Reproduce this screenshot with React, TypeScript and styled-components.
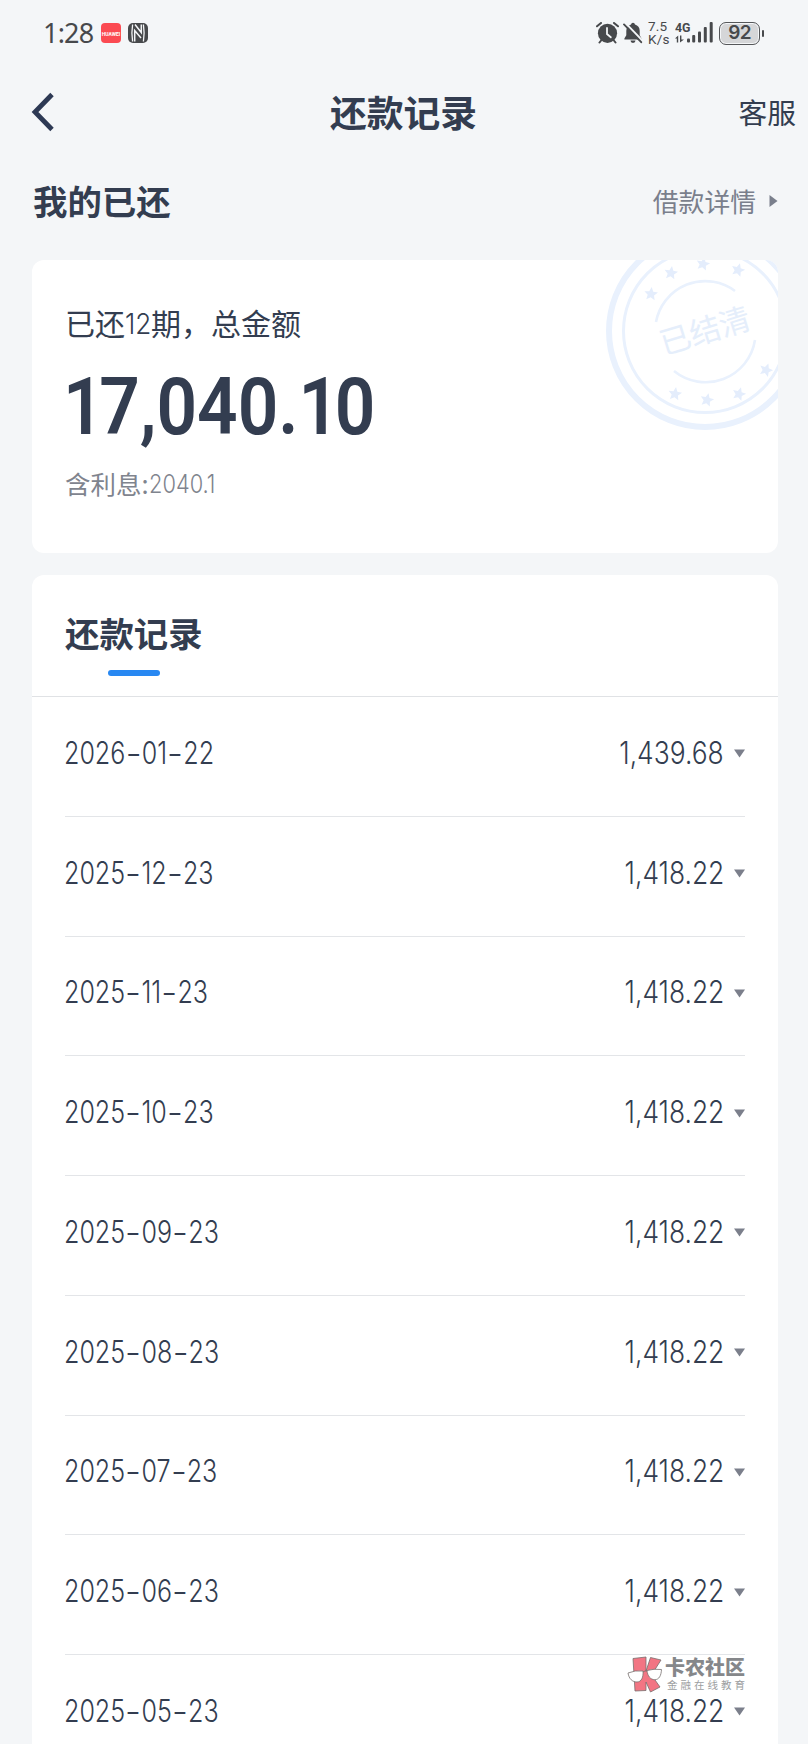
import React from 'react';
import styled, { createGlobalStyle } from 'styled-components';

const GlobalStyle = createGlobalStyle`
  * { box-sizing: border-box; }
  body {
    margin: 0;
    background: #f4f6f8;
    color: #333d50;
    font-family: 'Noto Sans CJK SC', sans-serif;
  }
`;

const Screen = styled.div`
  position: relative;
  width: 808px;
  height: 1744px;
  overflow: hidden;
  display: flex;
  flex-direction: column;
`;

const StatusBar = styled.header`
  flex: none;
  height: 66px;
  padding: 0 44px 0 43px;
  display: flex;
  align-items: center;
  justify-content: space-between;
  color: #47494c;
  font-family: Roboto, sans-serif;
`;

const StatusGroup = styled.div`
  display: flex;
  align-items: center;
`;

const Clock = styled.span`
  width: 58px;
  font: 400 27px/30px 'Noto Sans', sans-serif;
  letter-spacing: -0.8px;
`;

const AppBadge = styled.span`
  width: 20px;
  height: 20px;
  margin-right: 7px;
  border-radius: 4px;
  background: #fb4a52;
  color: #fff;
  font: 700 5px/22px Roboto, sans-serif;
  text-align: center;
`;

const NetSpeed = styled.div`
  width: 23px;
  margin: 0 4px 0 5px;
  font-size: 13.5px;
  line-height: 13px;
  letter-spacing: 0.2px;
  white-space: nowrap;
`;

const Signal = styled.svg`
  margin-right: 5px;
`;

const Battery = styled.div`
  width: 41px;
  height: 23px;
  border: 1.5px solid #55575a;
  border-radius: 7px;
  background: #d5d6d8;
  box-shadow: inset 0 0 0 1px #f4f6f8;
  font: 600 19px/20px Inter, sans-serif;
  letter-spacing: -0.8px;
  text-align: center;
`;

const BatteryTip = styled.span`
  width: 2px;
  height: 7px;
  margin-left: 2px;
  border-radius: 1px;
  background: #47494c;
`;

const NavBar = styled.nav`
  flex: none;
  height: 92px;
  padding: 0 12px;
  display: grid;
  grid-template-columns: 1fr auto 1fr;
  align-items: center;
`;

const BackIcon = styled.svg`
  margin-left: 19px;
`;

const PageTitle = styled.h1`
  margin: -3px 1px 0 0;
  font-size: 36.8px;
  line-height: 44px;
  font-weight: 700;
`;

const NavLink = styled.span`
  margin-top: -1px;
  justify-self: end;
  font-size: 28.8px;
  line-height: 40px;
`;

const SectionHead = styled.div`
  flex: none;
  height: 102px;
  padding: 20px 30px 0 33px;
  display: flex;
  align-items: flex-start;
  justify-content: space-between;
`;

const Heading = styled.h2`
  margin: 0;
  font-size: 34.4px;
  line-height: 44px;
  font-weight: 700;
`;

const DetailLink = styled.span`
  margin-top: 2px;
  display: flex;
  align-items: center;
  gap: 13px;
  font-size: 25.8px;
  line-height: 42px;
  color: #7a7f8c;
`;

const Card = styled.section<{ $height: number }>`
  position: relative;
  height: ${(p) => p.$height}px;
  margin: 0 30px 22px 32px;
  flex: none;
  border-radius: 12px;
  background: #fff;
  overflow: hidden;
`;

const Summary = styled.div`
  padding: 42px 33px 0;
  display: flex;
  flex-direction: column;
  align-items: flex-start;
`;

const SummaryLabel = styled.div`
  display: flex;
  font-size: 30px;
  line-height: 40px;
`;

const LabelCount = styled.span`
  width: 26px;
  font: 350 29px/43px Inter, sans-serif;
  transform: scaleX(0.9);
  transform-origin: left;
`;

const Total = styled.div`
  margin: 20px 0 0 -2px;
  font: 600 79px/84px Roboto, sans-serif;
  white-space: nowrap;
  transform: scaleX(0.9);
  transform-origin: left;
`;

const NarrowDigit = styled.span`
  letter-spacing: -5px;
`;

const Interest = styled.div`
  margin-top: 15px;
  display: flex;
  font-size: 25.5px;
  line-height: 38px;
  color: #7f848e;
`;

const InterestValue = styled.span`
  font: 350 26px/40px Inter, sans-serif;
  transform: scaleX(0.84);
  transform-origin: left;
`;

const Seal = styled.svg`
  position: absolute;
  top: -29.5px;
  right: -28px;
`;

const TabHead = styled.div`
  height: 122px;
  padding: 35px 33px 0;
  border-bottom: 1px solid #e0e2e5;
`;

const TabLine = styled.div`
  width: 52px;
  height: 6px;
  margin: 16px 0 0 43px;
  border-radius: 3px;
  background: #2888f2;
`;

const Records = styled.ul`
  margin: 0;
  padding: 0 33px;
  list-style: none;
`;

const Row = styled.li`
  height: 119.75px;
  padding-bottom: 7px;
  display: flex;
  align-items: center;
  justify-content: space-between;
  border-bottom: 1px solid #e3e5e8;
`;

const DateText = styled.span`
  margin-left: -1px;
  font: 350 30.5px/40px Inter, sans-serif;
  transform: scaleX(0.822);
  transform-origin: left;
`;

const Dash = styled.span`
  display: inline-block;
  margin: 0 3px;
  transform: scaleX(1.4);
`;

const Amount = styled.span`
  display: flex;
  align-items: center;
  gap: 10px;
`;

const AmountText = styled.span`
  font: 350 30.5px/40px Inter, sans-serif;
  transform: scaleX(0.865);
  transform-origin: right;
`;

const Caret = styled.svg`
  margin-top: 2px;
`;

const Watermark = styled.div`
  position: absolute;
  left: 627px;
  top: 1656px;
  display: flex;
  gap: 2px;
  color: #85878a;
`;

const BrandName = styled.div`
  font-size: 20px;
  line-height: 21px;
  font-weight: 900;
`;

const BrandTag = styled.div`
  margin: 2px 0 0 2px;
  font-size: 10.5px;
  line-height: 12px;
  letter-spacing: 3px;
  white-space: nowrap;
  color: #9c9ea1;
`;

const records = [
  ['2026-01-22', '1,439.68'],
  ['2025-12-23', '1,418.22'],
  ['2025-11-23', '1,418.22'],
  ['2025-10-23', '1,418.22'],
  ['2025-09-23', '1,418.22'],
  ['2025-08-23', '1,418.22'],
  ['2025-07-23', '1,418.22'],
  ['2025-06-23', '1,418.22'],
  ['2025-05-23', '1,418.22'],
];

const stars = [
  [46, 63], [66, 42], [98, 33], [133, 39], [70, 163], [102, 169], [134, 163], [161, 139],
];

const NfcIcon = () => (
  <svg width="20" height="20" viewBox="0 0 20 20">
    <rect width="20" height="20" rx="5" fill="#47494c" />
    <path d="M4.6 1.5Q3.2 10 4.6 18.5M15.4 1.5Q16.8 10 15.4 18.5" fill="none" stroke="#f4f6f8" strokeWidth="1.3" />
    <path d="M6.7 18.5V7.5L13 15M7 1.5l6.3 8V1.5" fill="none" stroke="#f4f6f8" strokeWidth="1.5" />
  </svg>
);

const AlarmIcon = () => (
  <svg width="23" height="22" viewBox="0 0 23 22">
    <path d="M1 4.3L5 1M22 4.3L18 1M5.5 18L3.5 20.5M17.5 18l2 2.5" stroke="#47494c" strokeWidth="2" strokeLinecap="round" />
    <circle cx="11.5" cy="11.3" r="9.6" fill="#47494c" />
    <path d="M11 6v6l3.8 3.3" fill="none" stroke="#f4f6f8" strokeWidth="1.8" strokeLinecap="round" />
  </svg>
);

const BellSvg = styled.svg`
  margin-left: 4px;
`;

const BellOffIcon = () => (
  <BellSvg width="20" height="22" viewBox="0 0 20 22">
    <path d="M10 .8a2 2 0 012 1.6c3 .8 4.7 3.2 4.7 6.3v4.5l1.9 3.3v1H1.4v-1l1.9-3.3V8.7c0-3 1.8-5.5 4.7-6.3A2 2 0 0110 .8zM7.5 18.6h5a2.5 2.4 0 01-5 0z" fill="#47494c" />
    <path d="M2.8 1.4L20 19.2" stroke="#f4f6f8" strokeWidth="2" />
    <path d="M1 2.4L18.2 20.2" stroke="#47494c" strokeWidth="1.9" strokeLinecap="round" />
  </BellSvg>
);

const SignalIcon = () => (
  <Signal width="39" height="24" viewBox="0 0 39 24" fill="#47494c">
    <text x="0" y="10.5" fontFamily="Roboto, sans-serif" fontSize="13" fontWeight="700" textLength="15.5" lengthAdjust="spacingAndGlyphs">4G</text>
    <path d="M0 17.5L3.2 14.5v7H1.8v-4zM5 14.5h1.4v4H9L5 21.5z" />
    <rect x="12" y="17.5" width="3" height="4" rx="1" />
    <rect x="17.2" y="14" width="3" height="7.5" rx="1" />
    <rect x="23" y="10.5" width="3" height="11" rx="1" />
    <rect x="28.8" y="6" width="3" height="15.5" rx="1" />
    <rect x="34.7" y="1" width="3" height="20.5" rx="1" />
  </Signal>
);

const SealMark = () => (
  <Seal width="200" height="200" viewBox="0 0 200 200" fill="none" stroke="#e9f1fd">
    <circle cx="99" cy="100" r="96" strokeWidth="6" />
    <circle cx="99" cy="100" r="81.5" strokeWidth="3" />
    <path d="M50 91A50 50 0 01129 60M68 140A50 50 0 00149 109" strokeWidth="2.6" />
    {stars.map(([x, y]) => (
      <path key={`${x}-${y}`} transform={`translate(${x - 1} ${y}) rotate(${x / 8})`} fill="#e4edfc" stroke="none"
        d="M0-7L2-2.5 6.8-2.2 3.2 1.1 4.2 5.8 0 3.3-4.2 5.8-3.2 1.1-6.8-2.2-2-2.5z" />
    ))}
    <text x="99" y="111" textAnchor="middle" transform="rotate(-17 99 100)" fill="#e5eefb" stroke="none" fontSize="31" fontFamily="Noto Sans CJK SC, sans-serif">已结清</text>
  </Seal>
);

const BrandMark = () => (
  <svg width="36" height="37" viewBox="0 0 36 37" stroke="#77706f" strokeWidth=".8">
    <path d="M6 2.5L19 1v14L23.5 1.5 34 4 24.500 19 33 31 23.500 36 19 26v8.500L8 35z" fill="#f27583" />
    <path d="M1 17q7-3 15-2c.5 6-1.500 11-6 11S2 23 1 17zM20 14.500q7-2 14.500-1c-.3 6-2.400 10.200-6.700 10.200S20.500 20 20 14.500z" fill="#fff" />
    <path d="M16 16q2-1.500 4-1" fill="none" />
  </svg>
);

const CaretDown = () => (
  <Caret width="11" height="9" viewBox="0 0 11 9"><path d="M0 .5h11L5.5 8.5z" fill="#7b7f8b" /></Caret>
);

export default function App() {
  return (
    <>
      <GlobalStyle />
      <Screen>
        <StatusBar>
          <StatusGroup>
            <Clock>1:28</Clock>
            <AppBadge>HUAWEI</AppBadge>
            <NfcIcon />
          </StatusGroup>
          <StatusGroup>
            <AlarmIcon />
            <BellOffIcon />
            <NetSpeed>7.5<br />K/s</NetSpeed>
            <SignalIcon />
            <Battery>92</Battery>
            <BatteryTip />
          </StatusGroup>
        </StatusBar>
        <NavBar>
          <BackIcon width="24" height="40" viewBox="0 0 24 40"><path d="M21 2.5L4 20l17 17.5" fill="none" stroke="#2d3954" strokeWidth="4.8" /></BackIcon>
          <PageTitle>还款记录</PageTitle>
          <NavLink>客服</NavLink>
        </NavBar>
        <SectionHead>
          <Heading>我的已还</Heading>
          <DetailLink>
            借款详情
            <svg width="9" height="12" viewBox="0 0 9 12"><path d="M.5 0v12L8.5 6z" fill="#7a7f8c" /></svg>
          </DetailLink>
        </SectionHead>
        <Card $height={293}>
          <SealMark />
          <Summary>
            <SummaryLabel>已还<LabelCount>12</LabelCount>期，总金额</SummaryLabel>
            <Total><NarrowDigit>1</NarrowDigit>7,040.<NarrowDigit>1</NarrowDigit>0</Total>
            <Interest>含利息:<InterestValue>2040.1</InterestValue></Interest>
          </Summary>
        </Card>
        <Card $height={1240}>
          <TabHead>
            <Heading>还款记录</Heading>
            <TabLine />
          </TabHead>
          <Records>
            {records.map(([date, amount]) => {
              const [year, month, day] = date.split('-');
              return (
                <Row key={date}>
                  <DateText>{year}<Dash>-</Dash>{month}<Dash>-</Dash>{day}</DateText>
                  <Amount>
                    <AmountText>{amount}</AmountText>
                    <CaretDown />
                  </Amount>
                </Row>
              );
            })}
          </Records>
        </Card>
        <Watermark>
          <BrandMark />
          <div>
            <BrandName>卡农社区</BrandName>
            <BrandTag>金融在线教育</BrandTag>
          </div>
        </Watermark>
      </Screen>
    </>
  );
}
